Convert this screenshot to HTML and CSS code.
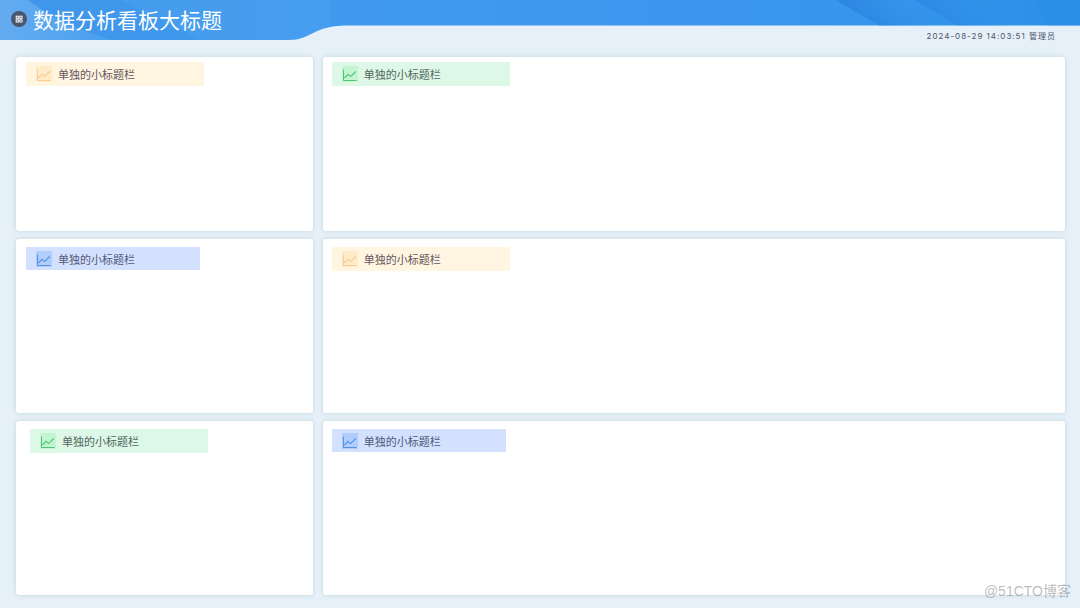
FILE: index.html
```html
<!DOCTYPE html>
<html lang="zh-CN">
<head>
<meta charset="utf-8">
<meta name="viewport" content="width=device-width, initial-scale=1">
<title>数据分析看板大标题</title>
<link rel="stylesheet" href="styles.css">
</head>
<body>
<svg class="symbols" aria-hidden="true">
  <symbol id="chart" viewBox="0 0 16 16">
    <path d="M1.500 3.500V14.500H14.500" fill="none" stroke="currentColor" stroke-width="1"/>
    <path d="M2.500 12L6 8.300L8.600 10.600L13.800 5.500" fill="none" stroke="currentColor" stroke-width="1.1"/>
  </symbol>
</svg>
<div class="board">
  <header class="header">
    <svg class="header-art" viewBox="0 0 1080 40" preserveAspectRatio="none" aria-hidden="true">
      <defs>
        <linearGradient id="sky" x1="0" x2="1" y1="0" y2="0">
          <stop offset="0" stop-color="#3f96e9"/>
          <stop offset=".3" stop-color="#419aef"/>
          <stop offset=".75" stop-color="#3996ed"/>
          <stop offset="1" stop-color="#2c90e8"/>
        </linearGradient>
        <linearGradient id="glow" x1="0" x2="1" y1="0" y2="0">
          <stop offset="0" stop-color="#64acf2"/>
          <stop offset="1" stop-color="#4a9fee"/>
        </linearGradient>
        <linearGradient id="fold" gradientUnits="userSpaceOnUse" x1="866" y1="20" x2="900" y2="-20">
          <stop offset="0" stop-color="#2680dc" stop-opacity=".65"/>
          <stop offset="1" stop-color="#3695ee" stop-opacity="0"/>
        </linearGradient>
        <linearGradient id="fold-far" gradientUnits="userSpaceOnUse" x1="940" y1="20" x2="974" y2="-20">
          <stop offset="0" stop-color="#2682e0" stop-opacity=".55"/>
          <stop offset="1" stop-color="#3695ee" stop-opacity="0"/>
        </linearGradient>
        <clipPath id="wave"><path d="M0 0H1080V25.500H346C312 26 312 40 288 40H0Z"/></clipPath>
      </defs>
      <g clip-path="url(#wave)">
        <path fill="url(#sky)" d="M0 0H1080V40H0Z"/>
        <path fill="url(#glow)" d="M0 0H28C46 14 76 30 112 40H0Z"/>
        <path fill="#55a5ef" opacity=".3" d="M120 0H330V40H200Z"/>
        <path fill="url(#fold)" d="M836 0H925L960 26H880Z"/>
        <path fill="url(#fold-far)" d="M915 0H1010L1040 26H958Z"/>
        <path fill="#288de6" opacity=".5" d="M1036 0H1080V26H1048Z"/>
      </g>
    </svg>
    <div class="brand">
      <svg class="brand-icon" viewBox="0 0 16 16" aria-hidden="true">
        <circle cx="8" cy="8" r="8" fill="#4b566b"/>
        <g fill="none" stroke="#f3f6fb" stroke-width="1">
          <rect x="5.200" y="5.200" width="2.200" height="2.200"/>
          <rect x="8.800" y="5.200" width="2.200" height="2.200"/>
          <rect x="5.200" y="8.800" width="2.200" height="2.200"/>
          <rect x="8.800" y="8.800" width="2.200" height="2.200"/>
        </g>
      </svg>
      <h1 class="title">数据分析看板大标题</h1>
    </div>
    <div class="status"><time datetime="2024-08-29T14:03:51">2024-08-29 14:03:51</time> <span>管理员</span></div>
  </header>
  <main class="grid">
    <section class="card card-side"><h2 class="label label-orange"><svg class="label-icon" aria-hidden="true"><use href="#chart"/></svg>单独的小标题栏</h2></section>
    <section class="card"><h2 class="label label-green"><svg class="label-icon" aria-hidden="true"><use href="#chart"/></svg>单独的小标题栏</h2></section>
    <section class="card card-side card-roomy"><h2 class="label label-blue"><svg class="label-icon" aria-hidden="true"><use href="#chart"/></svg>单独的小标题栏</h2></section>
    <section class="card card-roomy"><h2 class="label label-orange"><svg class="label-icon" aria-hidden="true"><use href="#chart"/></svg>单独的小标题栏</h2></section>
    <section class="card card-roomy card-inset"><h2 class="label label-green"><svg class="label-icon" aria-hidden="true"><use href="#chart"/></svg>单独的小标题栏</h2></section>
    <section class="card card-roomy"><h2 class="label label-blue"><svg class="label-icon" aria-hidden="true"><use href="#chart"/></svg>单独的小标题栏</h2></section>
  </main>
  <div class="watermark">@51CTO博客</div>
</div>
</body>
</html>
```
FILE: styles.css
```css
* {
  box-sizing: border-box;
}

body {
  margin: 0;
  background: #e5f0f8;
  color: #505468;
  font-family: "Noto Sans CJK SC", sans-serif;
}

.symbols {
  display: none;
}

.board {
  position: relative;
  display: flex;
  flex-direction: column;
  min-height: 100vh;
}

.header {
  position: relative;
  display: flex;
  align-items: flex-start;
  justify-content: space-between;
  height: 40px;
  padding: 0 24px 0 11px;
}

.header-art {
  position: absolute;
  inset: 0;
  width: 100%;
  height: 100%;
}

.brand {
  position: relative;
  display: flex;
  align-items: center;
  gap: 6px;
}

.brand-icon {
  width: 16px;
  height: 16px;
}

.title {
  margin: 0;
  color: #fff;
  font-size: 21px;
  font-weight: 400;
  line-height: 38px;
}

.status {
  position: relative;
  align-self: flex-end;
  font-family: Inter, "Noto Sans CJK SC", sans-serif;
  font-size: 8px;
  line-height: 8px;
  letter-spacing: 1px;
  white-space: nowrap;
}

.grid {
  flex: 1;
  display: grid;
  grid-template-columns: 2fr 5fr;
  grid-template-rows: repeat(3, 1fr);
  gap: 8px 10px;
  padding: 17px 15px 13px 16px;
}

.card {
  padding: 5px 9px;
  border-radius: 3px;
  background: #fff;
  box-shadow: 0 0 4px rgba(110, 130, 145, 0.25);
}

.card-side {
  padding-left: 10px;
}

.card-roomy {
  padding-top: 8px;
}

.card-inset {
  padding-left: 14px;
}

.label {
  display: flex;
  align-items: center;
  gap: 6px;
  width: 178px;
  height: 24px;
  margin: 0;
  padding-left: 10px;
  font-size: 11px;
  font-weight: 400;
  line-height: 16px;
}

.label-icon {
  width: 16px;
  height: 16px;
}

.label-orange {
  background: #fff5e1;
  color: #655660;
}

.label-orange .label-icon {
  background: #ffebc7;
  color: #f8cc98;
}

.label-green {
  background: #ddf8e6;
  color: #53665f;
}

.label-green .label-icon {
  background: #c3f5d2;
  color: #51c575;
}

.label-blue {
  width: 174px;
  height: 23px;
  background: #d4e1fe;
  color: #505979;
}

.label-blue .label-icon {
  background: #b0cdfb;
  color: #5292e4;
}

.watermark {
  position: absolute;
  right: 9px;
  bottom: 7px;
  color: rgba(130, 135, 140, 0.55);
  font-family: "Liberation Sans", "Noto Sans CJK SC", sans-serif;
  font-size: 14px;
  line-height: 20px;
}
```
